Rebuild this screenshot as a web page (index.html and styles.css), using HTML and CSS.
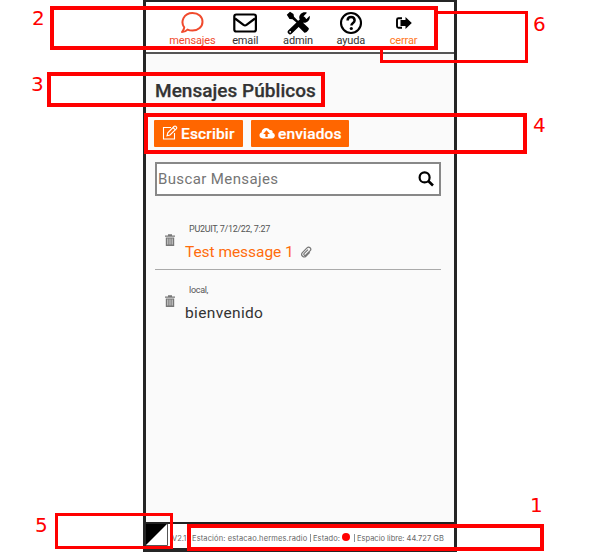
FILE: index.html
```
<!DOCTYPE html>
<html lang="es">
<head>
<meta charset="utf-8">
<title>Mensajes Públicos</title>
<link rel="stylesheet" href="styles.css">
</head>
<body>
<main class="phone">
  <nav class="nav">
    <a class="nav-item active"><svg width="24" height="24" viewBox="0 0 24 24"><path d="M4.2 16.3C.2 10.8 3.6 2 12.5 2c6 0 10 3.7 10 8.800s-4.200 8.800-10 8.800c-2 0-3.700-.4-5-1-1.600 1.700-3.500 2.500-5.500 2.500 1.200-1.300 2-2.800 2.200-4.800z" fill="none" stroke="currentColor" stroke-width="2" stroke-linejoin="round"/></svg><span>mensajes</span></a>
    <a class="nav-item"><svg width="24" height="24" viewBox="0 0 24 24"><rect x="1.300" y="3.500" width="21.600" height="17" rx="2" fill="none" stroke="#000" stroke-width="2.200"/><path d="M2 7.500l8.500 6.300q1.500 1 3 0L22 7.500" fill="none" stroke="#000" stroke-width="2.200"/></svg><span>email</span></a>
    <a class="nav-item"><svg width="24" height="24" viewBox="0 0 24 24"><path d="M4 21L17.500 8" stroke="#000" stroke-width="4.600" stroke-linecap="round"/><path d="M21 1.800l-3.500 3.500.8 2.100 2.200.6 3.200-3.300c.8 4.100-2.300 7.500-6.200 7L13.300 7.500c-.6-4 3.500-7.500 7.700-5.700z"/><path d="M.8 3.800L4 .8l3.500 2.300.5 2.600 5 5 2.200-.6 7.400 6.900c1.400 1.400-3 5.900-4.400 4.500l-7-7 .4-2L6.500 8.300 3.500 8z"/><circle cx="4.200" cy="20.800" r=".9" fill="#fff"/></svg><span>admin</span></a>
    <a class="nav-item"><svg width="24" height="24" viewBox="0 0 24 24"><circle cx="12" cy="12" r="10" fill="none" stroke="#000" stroke-width="2.100"/><path d="M8.600 9.500c0-4.600 7-4.600 7 0 0 2.500-3.200 2.500-3.200 5" fill="none" stroke="#000" stroke-width="2.500"/><circle cx="12.300" cy="17.500" r="1.600"/></svg><span>ayuda</span></a>
    <a class="nav-item exit"><svg width="24" height="24" viewBox="0 0 24 24"><path d="M10 7.200H6.500Q5 7.200 5 8.700v6.600q0 1.500 1.500 1.500H10" fill="none" stroke="#000" stroke-width="1.900"/><path d="M8.500 9h5V6l6.300 6-6.300 6v-3h-5z"/></svg><span>cerrar</span></a>
  </nav>
  <section class="content">
    <h1>Mensajes Públicos</h1>
    <div class="actions">
      <button class="button write"><svg width="16" height="16" viewBox="0 0 16 16" fill="none" stroke="#fff" stroke-width="1.100"><path d="M9 2.500H1.500v11.500h11V8"/><path d="M5 10.800l.8-3L12 1.500q1-1 2 0l.3.300q1 1 0 2L8 10zM11 2.500l2.300 2.300"/></svg><span>Escribir</span></button>
      <button class="button sent"><svg width="16" height="16" viewBox="0 0 16 16"><path d="M4 13.500C-.4 13.500-.4 8.200 2.600 7.600 2.500 2.500 8.900 1.400 10.800 5c2-.5 3.300 1 2.700 2.700 3.400.8 3 5.800-.6 5.800z" fill="#fff"/><path d="M7.500 5.300l3.400 3.600H8.700v3H6.400v-3h-2.200z" fill="#f60"/></svg><span>enviados</span></button>
    </div>
    <div class="search"><span>Buscar Mensajes</span><svg width="18" height="18" viewBox="0 0 18 18" fill="none" stroke="#000"><circle cx="7.600" cy="7.400" r="5" stroke-width="2.200"/><path d="M11.300 11l4.700 4.500" stroke-width="2.600"/></svg></div>
    <article class="message first">
      <svg class="trash" width="10" height="12" viewBox="0 0 10 12"><path d="M0 1.500h3V.2h4v1.300h3v1.200H0zM.8 3.500h8.400V12H.8z" fill="#777"/><path d="M2.800 4.500v6M5 4.500v6M7.200 4.500v6" stroke="#eee" stroke-width=".8"/></svg>
      <div><p class="meta">PU2UIT, 7/12/22, 7:27</p><h2 class="unread"><span>Test message 1</span><svg width="12" height="12" viewBox="0 0 12 12" fill="none" stroke="#777" stroke-width="1.200"><path d="M9.800 6.300L5.900 10.200C3.800 12.200.3 9.300 2.200 6.800L7 1.900c2.100-2 5 .6 3.200 2.800L5.900 9C4.700 10.100 3.100 8.600 4.200 7.400L8 3.600"/></svg></h2></div>
    </article>
    <article class="message second">
      <svg class="trash" width="10" height="12" viewBox="0 0 10 12"><path d="M0 1.500h3V.2h4v1.300h3v1.200H0zM.8 3.500h8.400V12H.8z" fill="#777"/><path d="M2.800 4.500v6M5 4.500v6M7.200 4.500v6" stroke="#eee" stroke-width=".8"/></svg>
      <div><p class="meta">local,</p><h2 class="welcome">bienvenido</h2></div>
    </article>
  </section>
  <footer class="footer">
    <svg class="contrast" width="22" height="22" viewBox="0 0 22 22"><path fill="#fff" d="M0 0h22v22H0z"/><path d="M0 0h21L0 21z"/><path d="M21.500 0v21.500H0" fill="none" stroke="#555"/></svg>
    <span class="version">V2.1</span>
    <span class="station">Estación: estacao.hermes.radio</span><i class="bar"></i><span class="state">Estado:</span><i class="dot"></i><i class="bar"></i><span class="space">Espacio libre: 44.727 GB</span>
  </footer>
</main>
<div class="mark mark-1"></div><b class="label label-1">1</b>
<div class="mark mark-2"></div><b class="label label-2">2</b>
<div class="mark mark-3"></div><b class="label label-3">3</b>
<div class="mark mark-4"></div><b class="label label-4">4</b>
<div class="mark mark-5"></div><b class="label label-5">5</b>
<div class="mark mark-6"></div><b class="label label-6">6</b>
</body>
</html>
```
FILE: styles.css
```
* { box-sizing: border-box; }
body { margin: 0; height: 552px; overflow: hidden; position: relative; background: #fff; font-family: Roboto, sans-serif; color: #333; }
svg { display: block; flex: none; }
h1, h2, p { margin: 0; white-space: nowrap; }
.phone { width: 314px; height: 552px; margin-left: 143px; border: 3px solid #252525; border-top-width: 2px; border-bottom-width: 4px; display: flex; flex-direction: column; background: #fafafa; }
.nav { height: 52px; flex: none; background: #fff; border-bottom: 2px solid #555; display: grid; grid-template-columns: repeat(5, 52.8px); justify-content: start; padding: 9px 0 0 20px; }
.nav-item { display: flex; flex-direction: column; align-items: center; font-size: 11px; line-height: 13px; letter-spacing: -.15px; }
.nav-item svg { margin-bottom: -1px; }
.active { color: #f04a2d; }
.exit span { color: #ff771c; }
.content { flex: 1; padding: 24px 14px 0 9px; }
h1 { font-size: 19px; line-height: 25px; font-weight: 500; letter-spacing: .03px; -webkit-text-stroke: .25px #333; }
.actions { display: flex; gap: 8px; margin: 17px 0 15px -1px; }
.button { height: 27px; border: 0; border-radius: 1px; padding: 0 7px 0 8px; display: flex; align-items: center; gap: 3px; background: #f60; color: #fff; font: 500 15.500px Roboto, sans-serif; letter-spacing: .15px; -webkit-text-stroke: .2px #fff; white-space: nowrap; }
.button svg { margin-top: -2px; }
.write { width: 89px; }
.sent { width: 98px; }
.search { height: 34px; width: 286px; border: 2px solid #888; background: #fff; display: flex; justify-content: space-between; align-items: center; padding: 0 4px 0 1px; font-size: 15px; letter-spacing: .38px; color: #757575; }
.message { height: 61px; width: 286px; display: flex; padding: 14px 0 0 10px; }
.first { height: 60px; margin-top: 14px; border-bottom: 1px solid #aaa; }
.second { padding-top: 15px; }
.message .trash { margin: 10px 10px 0 0; }
.meta { font-size: 9px; line-height: 10px; margin-left: 4px; letter-spacing: -.3px; color: #555; }
h2 { font-size: 15.500px; line-height: 20px; font-weight: 400; display: flex; align-items: center; gap: 6px; margin-top: 8px; letter-spacing: -.05px; }
.welcome { letter-spacing: .35px; }
.unread { color: #ff6c0c; }
.footer { height: 26px; flex: none; background: #fff; border-top: 2px solid #222; display: flex; align-items: center; font: 7.500px Inter, sans-serif; color: #666; white-space: nowrap; padding-top: 4px; }
.contrast { margin-top: -6px; }
.version { width: 15px; margin: 0 5px 0 4px; }
.station { width: 116px; letter-spacing: .13px; }
.state { width: 28px; letter-spacing: .1px; }
.bar { width: 1px; height: 8px; background: #88949c; margin: 0 2px; }
.dot { width: 8px; height: 8px; border-radius: 50%; background: red; margin: -2px 2px 0 1px; }
.mark { position: absolute; border: 3.500px solid red; }
.mark-1 { left: 187px; top: 524px; width: 357px; height: 27px; border-width: 4px; }
.mark-2 { left: 50px; top: 6px; width: 388px; height: 44px; border-width: 4px; }
.mark-3 { left: 47px; top: 72px; width: 278px; height: 35px; border-width: 4px; }
.mark-4 { left: 144px; top: 113px; width: 383px; height: 41px; border-width: 4px; }
.mark-5 { left: 55px; top: 513px; width: 118px; height: 36px; border-width: 3px; }
.mark-6 { left: 380px; top: 11px; width: 148px; height: 52px; clip-path: polygon(57px 0, 100% 0, 100% 100%, 0 100%, 0 39px, 57px 39px); }
.label { position: absolute; font: 400 20px/20px "DejaVu Sans", sans-serif; color: red; }
.label-1 { left: 530px; top: 495px; }
.label-2 { left: 32px; top: 8px; }
.label-3 { left: 31px; top: 74px; }
.label-4 { left: 533px; top: 115px; }
.label-5 { left: 35px; top: 515px; }
.label-6 { left: 533px; top: 14px; }
```
